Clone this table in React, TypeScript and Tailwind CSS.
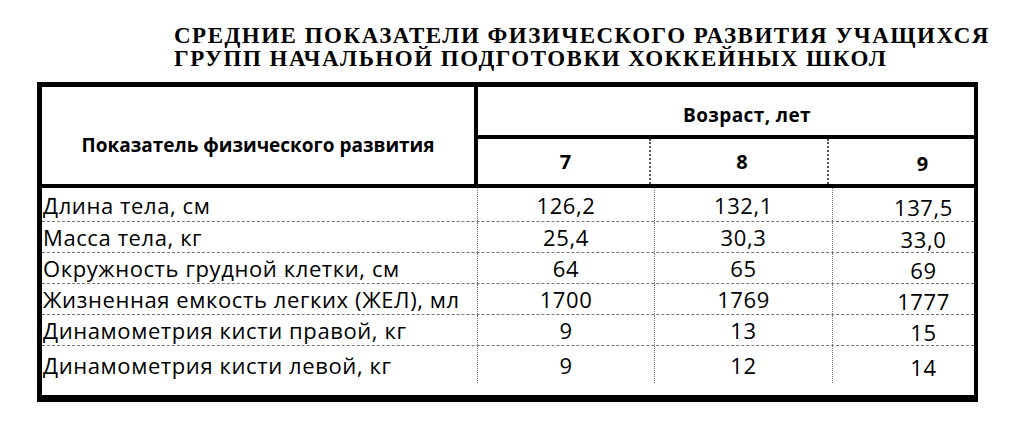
const rows = [
  { label: 'Длина тела, см', v: ['126,2', '132,1', '137,5'] },
  { label: 'Масса тела, кг', v: ['25,4', '30,3', '33,0'] },
  { label: 'Окружность грудной клетки, см', v: ['64', '65', '69'] },
  { label: 'Жизненная емкость легких (ЖЕЛ), мл', v: ['1700', '1769', '1777'] },
  { label: 'Динамометрия кисти правой, кг', v: ['9', '13', '15'] },
  { label: 'Динамометрия кисти левой, кг', v: ['9', '12', '14'] },
]

// высота строк: первая и последняя чуть выше
const rowClass = (i: number) => {
  if (i === 0) return 'flex h-[34px] border-b border-dashed border-[#777]'
  if (i === rows.length - 1) return 'flex h-[37px]'
  return 'flex h-[31px] border-b border-dashed border-[#777]'
}

export default function App() {
  return (
    <div className="w-[1024px] h-[427px] bg-white text-black overflow-hidden">
      {/* Заголовок */}
      <div className="pl-[174px] pt-[24px] h-[82px] font-['Liberation_Serif',serif] font-bold text-[23px] leading-[23px] tracking-[1.5px] uppercase">
        <div>Средние показатели физического развития учащихся</div>
        <div>групп начальной подготовки хоккейных школ</div>
      </div>

      {/* Таблица */}
      <div className="ml-[37px] w-[941px] border-t-[5px] border-l-[5px] border-r-[4px] border-b-[7px] border-black font-['Open_Sans','Noto_Sans',sans-serif]">
        {/* Шапка */}
        <div className="flex border-b-[4px] border-black">
          <div className="w-[436px] border-r-[4px] border-black flex items-center justify-center pt-[20px] text-[19px] font-bold">
            Показатель физического развития
          </div>
          <div className="flex-1 flex flex-col">
            <div className="h-[52px] border-b-[4px] border-black flex items-center justify-center pl-[42px] pt-[8px] text-[19px] tracking-[0.4px] font-bold">
              Возраст, лет
            </div>
            <div className="h-[45px] flex text-[20px] font-bold">
              <div className="w-[173px] border-r-2 border-dotted border-[#555] flex items-center justify-center pl-[4px]">7</div>
              <div className="w-[178px] border-r-2 border-dotted border-[#555] flex items-center justify-center pl-[6px]">8</div>
              <div className="flex-1 flex items-center justify-center pl-[42px] pt-[4px]">9</div>
            </div>
          </div>
        </div>

        {/* Строки */}
        <div className="pb-[12px] text-[22px] tracking-[0.6px]">
          {rows.map((r, i) => (
            <div key={r.label} className={rowClass(i)}>
              <div className="w-[436px] border-r border-dotted border-[#777] flex items-center pl-[1px] leading-none">
                {r.label}
              </div>
              <div className="w-[177px] border-r border-dotted border-[#777] flex items-center justify-center leading-none">
                {r.v[0]}
              </div>
              <div className="w-[178px] border-r border-dotted border-[#777] flex items-center justify-center leading-none">
                {r.v[1]}
              </div>
              <div className="flex-1 flex items-center justify-center pl-[40px] pt-[4px] leading-none">
                {r.v[2]}
              </div>
            </div>
          ))}
        </div>
      </div>
    </div>
  )
}
